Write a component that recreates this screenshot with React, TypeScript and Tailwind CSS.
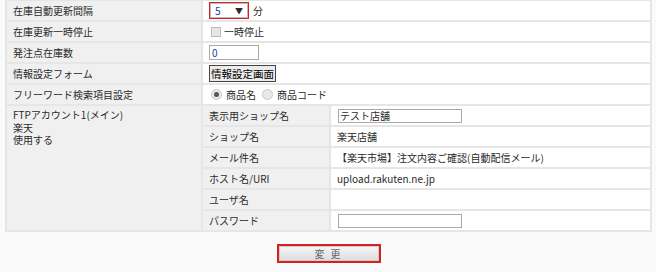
import React from "react";

const font = { fontFamily: '"Noto Sans CJK JP", "Noto Sans", sans-serif' };

function Label({ children, className = "h-[21px]" }: { children: React.ReactNode; className?: string }) {
  return (
    <td className={`bg-[#f0f0f0] border-2 border-[#e6e6e6] pl-[6px] align-middle ${className}`}>
      {children}
    </td>
  );
}

function Val({ children, colSpan, className = "" }: { children?: React.ReactNode; colSpan?: number; className?: string }) {
  return (
    <td colSpan={colSpan} className={`bg-white border-2 border-[#e6e6e6] pl-[6px] align-middle ${className}`}>
      {children}
    </td>
  );
}

function Radio({ checked }: { checked?: boolean }) {
  return (
    <span className="inline-flex w-[11px] h-[11px] rounded-full border border-[#c8c8c8] bg-[#e8e8e8] items-center justify-center mr-[4px] align-[-1px]">
      {checked && <span className="w-[5px] h-[5px] rounded-full bg-[#555]" />}
    </span>
  );
}

export default function App() {
  return (
    <div className="w-[656px] h-[272px] bg-[#fafafa] text-[#2a2a2a] text-[10px] leading-[13px] overflow-hidden" style={font}>
      <table className="ml-[5px] mt-[-1px] w-[647px] border-collapse">
        <colgroup>
          <col className="w-[196px]" />
          <col className="w-[128px]" />
          <col />
        </colgroup>
        <tbody>
          <tr>
            <Label>在庫自動更新間隔</Label>
            <Val colSpan={2}>
              <div className="flex items-center gap-[4px]">
                <span className="flex items-center w-[40px] h-[17px] border border-[#d92020] bg-white">
                  <span className="flex items-center justify-between w-full h-full border border-[#bbb] px-[4px]">
                    <span className="text-[#1a3a9a]">5</span>
                    <span className="text-[8px]">▼</span>
                  </span>
                </span>
                <span>分</span>
              </div>
            </Val>
          </tr>
          <tr>
            <Label>在庫更新一時停止</Label>
            <Val colSpan={2}>
              <div className="flex items-center pl-[2px]">
                <span className="inline-block w-[10px] h-[10px] border border-[#bdbdbd] bg-[#e6e6e6] mr-[3px]" />
                <span>一時停止</span>
              </div>
            </Val>
          </tr>
          <tr>
            <Label>発注点在庫数</Label>
            <Val colSpan={2}>
              <span className="flex items-center w-[50px] h-[15px] border border-[#a9a9a9] bg-white pl-[2px] text-[#1a3a9a]">0</span>
            </Val>
          </tr>
          <tr>
            <Label>情報設定フォーム</Label>
            <Val colSpan={2}>
              <span className="inline-flex items-center h-[17px] px-[1px] border border-[#444] bg-[#ececec] text-[10.5px] leading-[15px] text-black">情報設定画面</span>
            </Val>
          </tr>
          <tr>
            <Label>フリーワード検索項目設定</Label>
            <Val colSpan={2}>
              <div className="flex items-center pl-[2px]">
                <Radio checked />
                <span className="mr-[6px]">商品名</span>
                <Radio />
                <span>商品コード</span>
              </div>
            </Val>
          </tr>
          <tr>
            <td rowSpan={6} className="bg-[#f0f0f0] border-2 border-[#e6e6e6] pl-[6px] pt-[3px] align-top leading-[12.5px]">
              <div>FTPアカウント1(メイン)</div>
              <div>楽天</div>
              <div>使用する</div>
            </td>
            <Label>表示用ショップ名</Label>
            <Val className="pl-[7px]">
              <span className="flex items-center w-[124px] h-[14px] border border-[#a9a9a9] bg-white pl-[1px]">テスト店舗</span>
            </Val>
          </tr>
          <tr>
            <Label>ショップ名</Label>
            <Val>楽天店舗</Val>
          </tr>
          <tr>
            <Label>メール件名</Label>
            <Val>【楽天市場】注文内容ご確認(自動配信メール)</Val>
          </tr>
          <tr>
            <Label>ホスト名/URI</Label>
            <Val>upload.rakuten.ne.jp</Val>
          </tr>
          <tr>
            <Label>ユーザ名</Label>
            <Val />
          </tr>
          <tr>
            <Label>パスワード</Label>
            <Val className="pl-[7px]">
              <span className="block w-[124px] h-[14px] border border-[#a9a9a9] bg-white" />
            </Val>
          </tr>
        </tbody>
      </table>
      <div className="flex justify-center mt-[12px] pl-[1px]">
        <button className="w-[104px] h-[19px] border-2 border-[#d92020] bg-gradient-to-b from-[#f6f6f6] to-[#dcdcdc] text-[#666] text-[10px] leading-[13px] tracking-[2px] shadow-[inset_0_0_0_1px_#ccc]">
          変 更
        </button>
      </div>
    </div>
  );
}
